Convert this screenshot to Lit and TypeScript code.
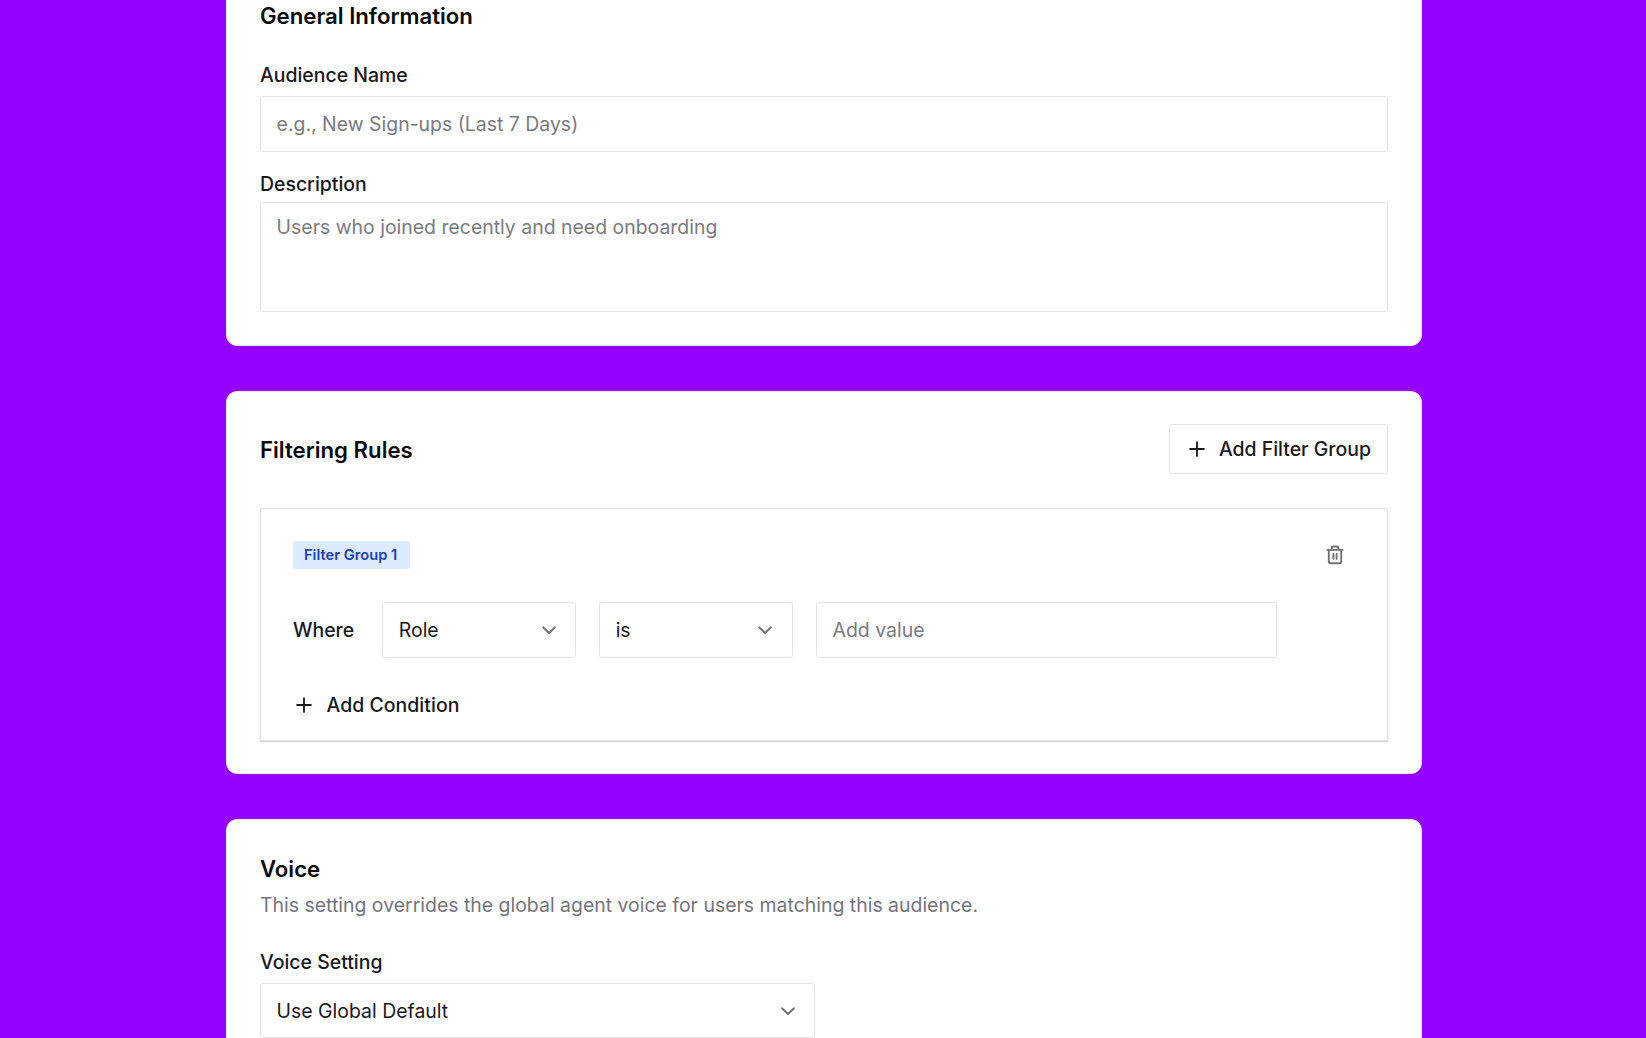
import { LitElement, html, css } from "lit";
import { customElement } from "lit/decorators.js";

const plus = html`<svg class="plus" viewBox="0 0 24 24"><path d="M12 4.5v15m7.5-7.5h-15" /></svg>`;
const chevron = html`<svg class="chevron" viewBox="0 0 24 24"><path d="m5.7 9.2 6.3 6 6.3-6" /></svg>`;
const trash = html`<svg class="trash" viewBox="0 0 18 20">
  <path d="M1.3 4.9h15.4M5.7 4.7V3a1.5 1.5 0 0 1 1.5-1.5h3.6a1.5 1.5 0 0 1 1.5 1.5v1.7M2.8 5.1v11.4a1.8 1.8 0 0 0 1.8 1.8h8.8a1.8 1.8 0 0 0 1.8-1.8V5.1M7.4 9v4.9M10.6 9v4.9" />
</svg>`;

@customElement("app-root")
export class AppRoot extends LitElement {
  static styles = css`
    :host {
      display: block;
      height: 1038px;
      overflow: hidden;
      background: #9500ff;
      font-family: Inter, "Liberation Sans", sans-serif;
      font-size: 19.45px;
      line-height: 28px;
      color: #18181b;
    }
    * {
      box-sizing: border-box;
    }
    .page {
      display: flex;
      flex-direction: column;
      gap: 44.7px;
      width: 1195.5px;
      margin: -40px 0 0 226.4px;
    }
    .card {
      background: #fff;
      border: 1px solid #e4e4e7;
      border-radius: 11px;
      padding: 32.6px;
    }
    .general {
      height: 386px;
    }
    .rules {
      height: 383.6px;
    }
    h2 {
      margin: 0;
      font-size: 22.2px;
      line-height: 32px;
      font-weight: 600;
      color: #09090b;
    }
    .label {
      font-weight: 500;
    }
    .box {
      display: flex;
      align-items: center;
      justify-content: space-between;
      flex: none;
      height: 55.6px;
      padding: 0 15.6px;
      background: #fff;
      border: 1.4px solid #e4e4e7;
      border-radius: 3px;
    }
    .muted {
      color: #75757d;
    }
    .hint {
      color: #7a7a81;
    }
    .general h2 {
      margin-top: 6.8px;
    }
    .general .first {
      margin-top: 29px;
    }
    .general .name {
      margin-top: 6.9px;
    }
    .general .second {
      margin-top: 17.9px;
    }
    .area {
      align-items: flex-start;
      height: 110.7px;
      margin-top: 4px;
      padding-top: 10px;
    }
    .head {
      display: flex;
      align-items: center;
      justify-content: space-between;
    }
    .rules h2 {
      padding-top: 0.6px;
    }
    .outline {
      display: flex;
      align-items: center;
      width: 219px;
      height: 50px;
      padding-left: 15.6px;
      border: 1.4px solid #e4e4e7;
      border-radius: 3px;
      font-weight: 500;
      gap: 11px;
    }
    .group {
      height: 233px;
      margin-top: 33.5px;
      padding: 32px;
      border: 1px solid #e4e4e7;
      box-shadow: 0 1.4px 3px rgba(0, 0, 0, 0.12), 0 1px 1px rgba(0, 0, 0, 0.1);
    }
    .badge {
      display: flex;
      align-items: center;
      height: 28px;
      width: 117px;
      padding-left: 11px;
      border-radius: 3px;
      background: #dbeafe;
      color: #1e40af;
      font-size: 14.7px;
      font-weight: 600;
    }
    .row {
      display: flex;
      align-items: center;
      gap: 22.9px;
      margin-top: 33.4px;
    }
    .where {
      width: 66.3px;
      font-weight: 500;
    }
    .field {
      width: 194px;
    }
    .value {
      width: 461px;
    }
    .add {
      display: flex;
      align-items: center;
      gap: 11.5px;
      margin-top: 33.4px;
      font-weight: 500;
    }
    .add span {
      letter-spacing: 0.04px;
    }
    .voice h2 {
      margin-top: 0.6px;
    }
    .sub {
      margin-top: 5.4px;
    }
    .voice .label {
      margin-top: 29px;
    }
    .voice .box {
      width: 555.2px;
      margin-top: 7px;
      padding-top: 1px;
    }
    svg {
      flex: none;
      display: block;
      fill: none;
      stroke: currentColor;
      stroke-linecap: round;
      stroke-linejoin: round;
    }
    .plus {
      width: 22px;
      height: 22px;
      stroke-width: 2;
    }
    .chevron {
      width: 22px;
      height: 22px;
      stroke-width: 2.2;
      color: #71717a;
    }
    .trash {
      width: 18px;
      height: 20px;
      margin-right: 11.4px;
      stroke-width: 1.9;
      color: #71717a;
    }
  `;

  render() {
    return html`
      <div class="page">
        <section class="card general">
          <h2>General Information</h2>
          <div class="label first">Audience Name</div>
          <div class="box name hint">e.g., New Sign-ups (Last 7 Days)</div>
          <div class="label second">Description</div>
          <div class="box area hint">Users who joined recently and need onboarding</div>
        </section>
        <section class="card rules">
          <div class="head">
            <h2>Filtering Rules</h2>
            <div class="outline">${plus}<span>Add Filter Group</span></div>
          </div>
          <div class="group">
            <div class="head">
              <div class="badge">Filter Group 1</div>
              ${trash}
            </div>
            <div class="row">
              <div class="where">Where</div>
              <div class="box field"><span>Role</span>${chevron}</div>
              <div class="box field"><span>is</span>${chevron}</div>
              <div class="box value hint">Add value</div>
            </div>
            <div class="add">${plus}<span>Add Condition</span></div>
          </div>
        </section>
        <section class="card voice">
          <h2>Voice</h2>
          <div class="sub muted">This setting overrides the global agent voice for users matching this audience.</div>
          <div class="label">Voice Setting</div>
          <div class="box"><span>Use Global Default</span>${chevron}</div>
        </section>
      </div>
    `;
  }
}
